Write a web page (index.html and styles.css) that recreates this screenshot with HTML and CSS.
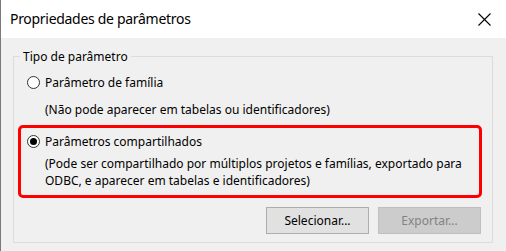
FILE: index.html
```html
<!DOCTYPE html>
<html lang="pt">
<head>
<meta charset="utf-8">
<title>Propriedades de parâmetros</title>
<link rel="stylesheet" href="styles.css">
</head>
<body>
<div class="window">
  <div class="titlebar">
    <span class="title">Propriedades de parâmetros</span>
    <svg class="close" width="13" height="13" viewBox="0 0 13 13" aria-label="Fechar">
      <path d="M0.5 0.5 L12.5 12.5 M12.5 0.5 L0.5 12.5" stroke="#000" stroke-width="1.1" fill="none"/>
    </svg>
  </div>
  <div class="content">
    <fieldset class="group">
      <legend class="legend">Tipo de parâmetro</legend>
      <label class="option">
        <input type="radio" name="tipo" class="radio">
        <span>Parâmetro de família</span>
      </label>
      <p class="desc">(Não pode aparecer em tabelas ou identificadores)</p>
      <div class="highlight">
        <label class="option">
          <input type="radio" name="tipo" class="radio" checked>
          <span>Parâmetros compartilhados</span>
        </label>
        <p class="desc">(Pode ser compartilhado por múltiplos projetos e famílias, exportado para<br>ODBC, e aparecer em tabelas e identificadores)</p>
      </div>
      <div class="buttons">
        <button class="btn">Selecionar...</button>
        <button class="btn" disabled>Exportar...</button>
      </div>
    </fieldset>
  </div>
</div>
</body>
</html>
```
FILE: styles.css
```css
html, body {
  margin: 0;
  padding: 0;
}
body {
  width: 506px;
  height: 251px;
  overflow: hidden;
  background: #f0f0f0;
  font-family: "Noto Sans", "Open Sans", sans-serif;
  font-size: 12px;
  color: #000;
}
.window {
  height: 251px;
  box-sizing: border-box;
  border-left: 1px solid #7a7a7a;
  display: flex;
  flex-direction: column;
}
.titlebar {
  height: 38px;
  flex: none;
  background: #fff;
  display: flex;
  align-items: center;
  justify-content: space-between;
  padding: 0 15px 0 9px;
}
.title {
  font-size: 14px;
  letter-spacing: -0.3px;
  line-height: 20px;
}
.close {
  display: block;
}
.content {
  flex: 1;
  padding: 10px 13px 0 12px;
}
.group {
  margin: 0;
  padding: 0 0 8px 0;
  border: 1px solid #dcdcdc;
  width: 480px;
  box-sizing: border-box;
}
.legend {
  margin-left: 6px;
  padding: 0 3px;
  line-height: 17px;
}
.option {
  display: flex;
  align-items: center;
  gap: 5px;
  height: 17px;
  margin: 9px 0 0 13px;
}
.radio {
  appearance: none;
  -webkit-appearance: none;
  margin: 0;
  width: 13px;
  height: 13px;
  border: 1px solid #333;
  border-radius: 50%;
  background: #fff;
  box-sizing: border-box;
  display: grid;
  place-items: center;
}
.radio:checked::after {
  content: "";
  width: 7px;
  height: 7px;
  border-radius: 50%;
  background: #000;
}
.desc {
  margin: 10px 0 0 31px;
  line-height: 17px;
}
.highlight {
  margin: 7px 10px 0 4px;
  border: 3px solid #ff0000;
  border-radius: 5px;
  padding: 5px 0 6px 0;
}
.highlight .option {
  margin: 0 0 0 6px;
}
.highlight .desc {
  margin: 5px 0 0 24px;
}
.buttons {
  display: flex;
  justify-content: flex-end;
  gap: 9px;
  margin: 9px 11px 0 0;
}
.btn {
  width: 103px;
  height: 27px;
  font: inherit;
  color: #000;
  background: #e1e1e1;
  border: 1px solid #adadad;
  padding: 0;
}
.btn:disabled {
  background: #cccccc;
  border-color: #bfbfbf;
  color: #838383;
}
```
